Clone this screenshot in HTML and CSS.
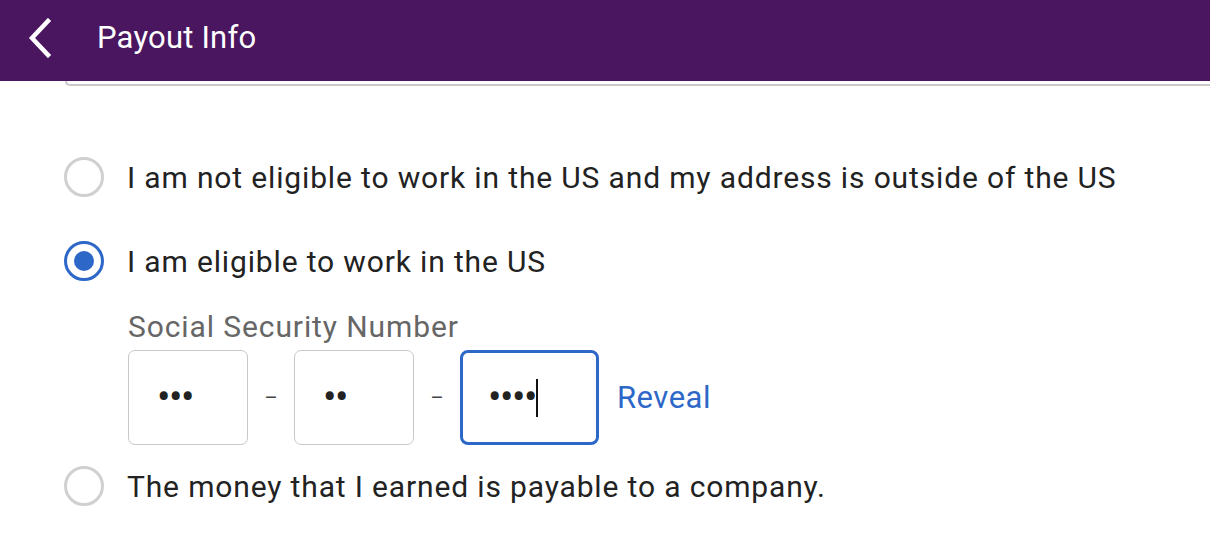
FILE: index.html
```html
<!DOCTYPE html>
<html>
<head>
<meta charset="utf-8">
<link rel="stylesheet" href="styles.css">
</head>
<body>
<header class="topbar">
  <svg class="back" width="28" height="40" viewBox="0 0 28 40"><path d="M22 3 L6 20 L22 37" fill="none" stroke="#fff" stroke-width="4.5" stroke-linecap="square"/></svg>
  <h1 class="title">Payout Info</h1>
</header>
<div class="card-edge"></div>
<main class="content">
  <label class="option">
    <span class="radio"></span>
    <span class="text">I am not eligible to work in the US and my address is outside of the US</span>
  </label>
  <label class="option option-2">
    <span class="radio checked"></span>
    <span class="text">I am eligible to work in the US</span>
  </label>
  <div class="ssn">
    <div class="ssn-label">Social Security Number</div>
    <div class="ssn-row">
      <div class="box"><span class="dots">•••</span></div>
      <span class="dash">–</span>
      <div class="box"><span class="dots">••</span></div>
      <span class="dash">–</span>
      <div class="box focus"><span class="dots">••••</span><span class="caret"></span></div>
      <a class="reveal">Reveal</a>
    </div>
  </div>
  <label class="option option-3">
    <span class="radio"></span>
    <span class="text">The money that I earned is payable to a company.</span>
  </label>
</main>
</body>
</html>
```
FILE: styles.css
```css
* { box-sizing: border-box; }
html, body { margin: 0; padding: 0; background: #fff; }
body { font-family: Roboto, "Noto Sans", sans-serif; color: #222; width: 1210px; height: 548px; overflow: hidden; }
.topbar { height: 81px; background: #4a1660; display: flex; align-items: center; padding-left: 26px; padding-bottom: 6px; }
.back { display: block; }
.title { margin: 0 0 0 43px; font-weight: 400; font-size: 31px; color: #fff; letter-spacing: 0.2px; }
.card-edge { margin-left: 65px; height: 5px; border: 2px solid #c8c8c8; border-top: none; border-right: none; border-bottom-left-radius: 6px; }
.content { padding-left: 64px; padding-top: 71px; }
.option { display: flex; align-items: center; height: 40px; }
.radio { width: 40px; height: 40px; border-radius: 50%; border: 3px solid #d0d0d0; flex: none; display: flex; align-items: center; justify-content: center; }
.radio.checked { border-color: #2d67c8; }
.radio.checked::after { content: ""; width: 20px; height: 20px; border-radius: 50%; background: #2d67c8; }
.text { margin-left: 23px; font-size: 30px; letter-spacing: 0.85px; color: #222; white-space: nowrap; }
.option-2 { margin-top: 44px; }
.ssn { padding-left: 64px; margin-top: 30px; }
.ssn-label { font-size: 30px; letter-spacing: 0.9px; color: #666; line-height: 32px; }
.ssn-row { display: flex; align-items: center; margin-top: 7px; }
.box { width: 120px; height: 95px; border: 1.5px solid #c8c8c8; border-radius: 7px; display: flex; align-items: center; padding-left: 28px; color: #222; }
.dots { font-size: 40px; letter-spacing: -1.5px; line-height: 1; }
.box.focus { width: 139px; border: 3px solid #2d67c8; border-radius: 8px; padding-left: 25px; }
.caret { display: inline-block; width: 2px; height: 38px; background: #111; margin-left: 0; }
.dash { width: 46px; text-align: center; font-size: 20px; color: #444; }
.reveal { margin-left: 18px; font-size: 31px; letter-spacing: 0.5px; color: #2d67c8; }
.option-3 { margin-top: 21px; }
```
